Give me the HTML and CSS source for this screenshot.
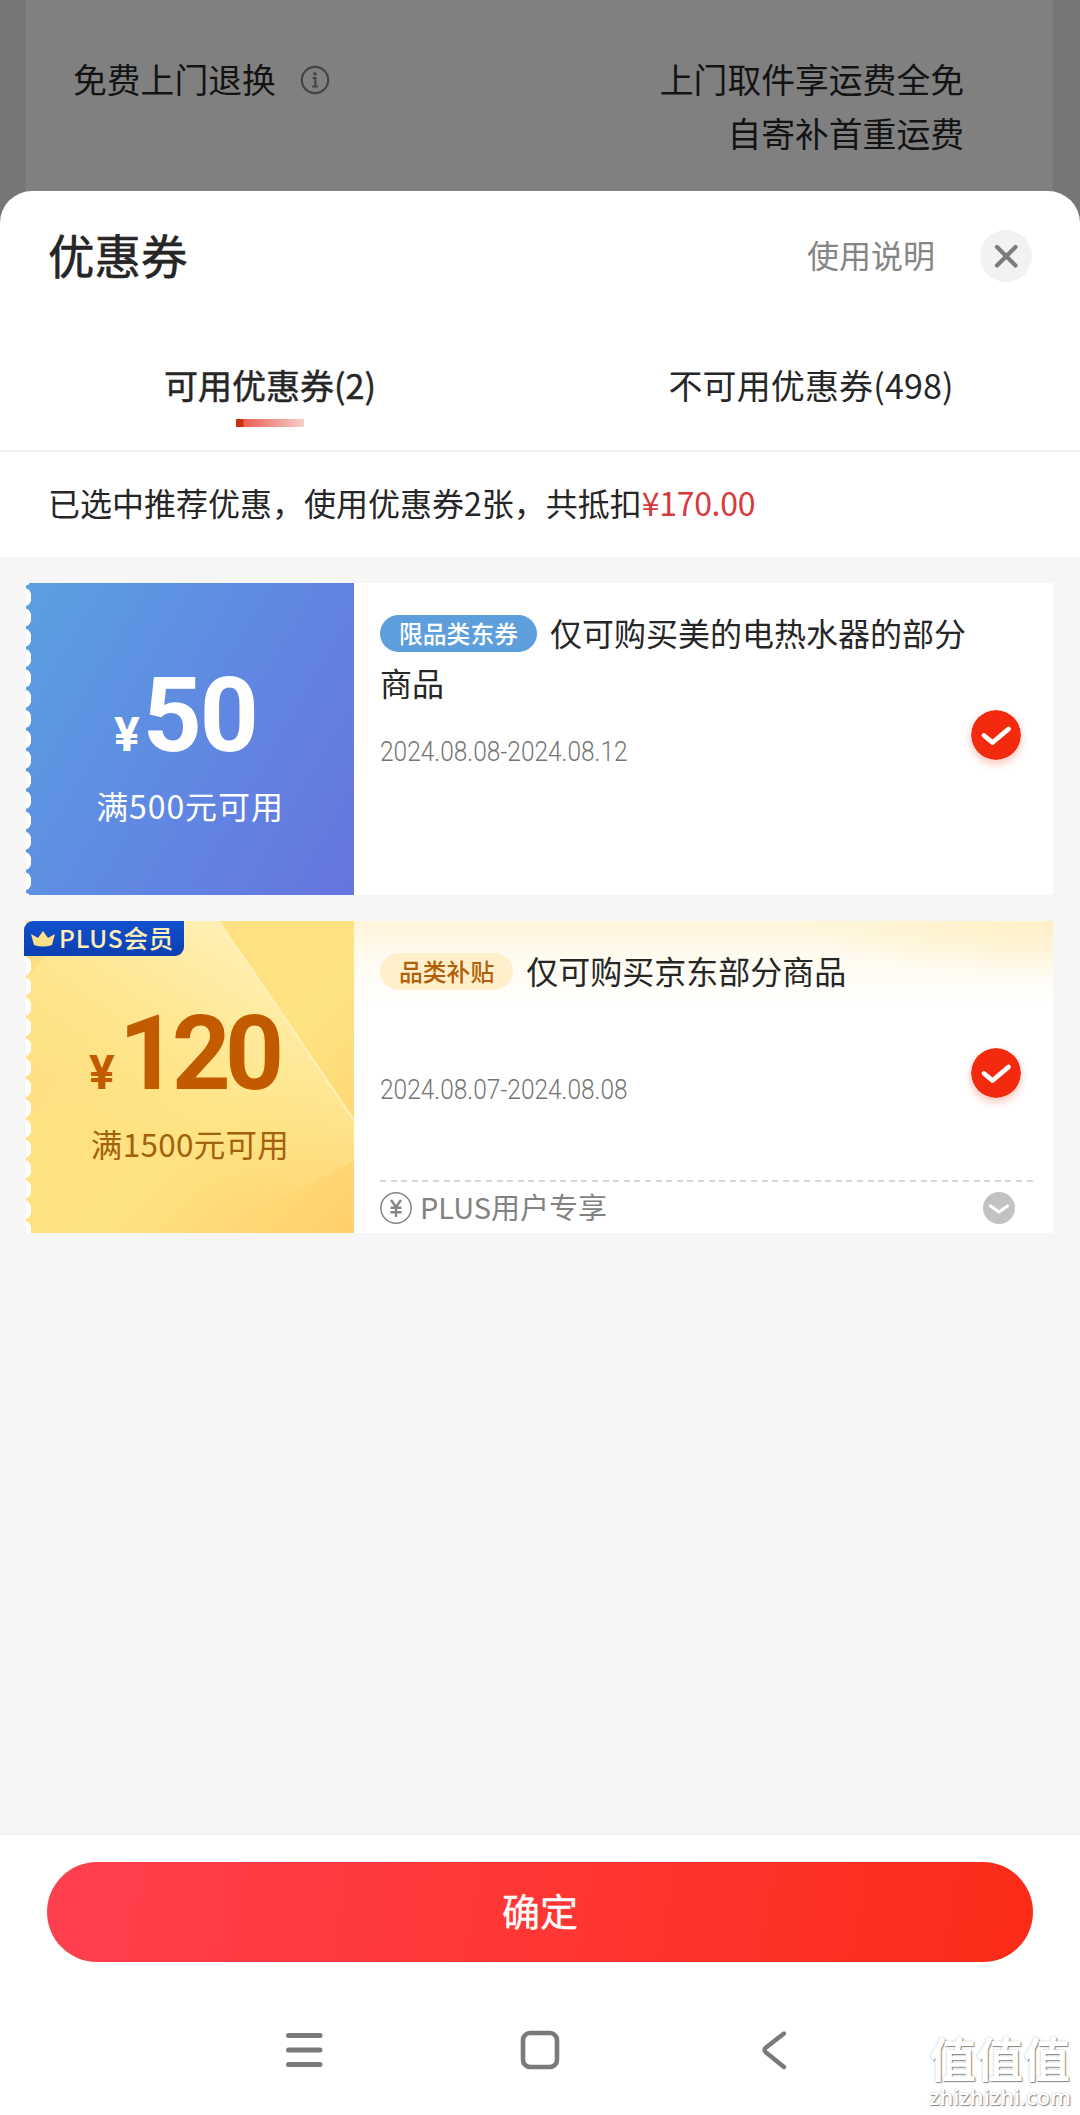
FILE: index.html
```html
<!DOCTYPE html>
<html lang="zh-CN">
<head>
<meta charset="utf-8">
<title>优惠券</title>
<link rel="stylesheet" href="styles.css">
</head>
<body>
<div class="screen">
  <section class="behind">
    <div class="behind-card">
      <div class="service"><span>免费上门退换</span>
        <svg class="info" viewBox="0 0 30 30"><circle cx="15" cy="15" r="13.2" fill="none" stroke="#444" stroke-width="2.2"/><circle cx="15" cy="9" r="1.8" fill="#444"/><path d="M12.500 13h2.900v8M12 21.500h6" fill="none" stroke="#444" stroke-width="2.200"/></svg>
      </div>
      <div class="service-desc">上门取件享运费全免<br>自寄补首重运费</div>
    </div>
  </section>
  <main class="sheet">
    <header class="head">
      <h1>优惠券</h1>
      <span class="help">使用说明</span>
      <span class="close"><svg viewBox="0 0 52 52"><path d="M17 17L35.500 35.500M35.500 17L17 35.500" stroke="#7c7c7c" stroke-width="4.200" stroke-linecap="round"/></svg></span>
    </header>
    <nav class="tabs">
      <div class="tab active">可用优惠券(2)</div>
      <div class="tab">不可用优惠券(498)</div>
    </nav>
    <p class="summary">已选中推荐优惠，使用优惠券2张，共抵扣<span class="price">¥170.00</span></p>
    <section class="list">
      <article class="coupon blue">
        <div class="stub">
          <div class="amount"><span class="yen">¥</span><span class="num">50</span></div>
          <div class="cond">满500元可用</div>
        </div>
        <div class="body">
          <div class="desc"><span class="tag">限品类东券</span>仅可购买美的电热水器的部分商品</div>
          <div class="date">2024.08.08-2024.08.12</div>
          <svg class="check" viewBox="0 0 50 50"><circle cx="25" cy="25" r="25" fill="#f42a0e"/><path d="M13 25.500L21.500 32.500L37.500 19" fill="none" stroke="#fff" stroke-width="4.800" stroke-linecap="round" stroke-linejoin="round"/></svg>
        </div>
      </article>
      <article class="coupon gold">
        <div class="stub">
          <svg class="rays" viewBox="0 0 328 312" preserveAspectRatio="none">
            <defs>
              <linearGradient id="ray" x1=".75" y1=".1" x2=".35" y2=".75"><stop offset="0" stop-color="#fff3c0" stop-opacity=".85"/><stop offset="1" stop-color="#ffe98a" stop-opacity="0"/></linearGradient>
            </defs>
            <path d="M0 60L45 0H194L328 199V240L190 312H0z" fill="url(#ray)"/>
            <path d="M210 25L328 199" stroke="#fff0b8" stroke-width="2"/>
          </svg>
          <div class="plus"><svg viewBox="0 0 24 18"><path d="M3 15L0 4L7 8L12 1L17 8L24 4L21 15Q12 18 3 15z" fill="#ffe08a"/></svg><span>PLUS会员</span></div>
          <div class="amount"><span class="yen">¥</span><span class="num">120</span></div>
          <div class="cond">满1500元可用</div>
        </div>
        <div class="body">
          <div class="desc"><span class="tag">品类补贴</span>仅可购买京东部分商品</div>
          <div class="date">2024.08.07-2024.08.08</div>
          <svg class="check" viewBox="0 0 50 50"><circle cx="25" cy="25" r="25" fill="#f42a0e"/><path d="M13 25.500L21.500 32.500L37.500 19" fill="none" stroke="#fff" stroke-width="4.800" stroke-linecap="round" stroke-linejoin="round"/></svg>
          <div class="perk">
            <svg viewBox="0 0 32 32"><g fill="none" stroke="#858585"><circle cx="16" cy="16" r="15.200" stroke-width="1.500"/><path d="M11 8L16 15L21 8M16 15V25M10.500 15.800H21.500M10.500 20.300H21.500" stroke-width="2.400"/></g></svg>
            <span class="perk-text">PLUS用户专享</span>
            <svg class="more" viewBox="0 0 32 32"><circle cx="16" cy="16" r="16" fill="#c2c2c2"/><path d="M7.500 14L16 20L24.500 14" fill="none" stroke="#fff" stroke-width="3.200" stroke-linecap="round" stroke-linejoin="round"/></svg>
          </div>
        </div>
      </article>
    </section>
    <footer class="foot"><button class="ok">确定</button></footer>
    <div class="sysnav">
      <svg viewBox="0 0 40 40"><path d="M4.500 5.500H36M4.500 20H36M4.500 34.500H36" stroke="#7a7a7a" stroke-width="5" stroke-linecap="round"/></svg>
      <svg viewBox="0 0 40 40"><rect x="3" y="3" width="34" height="34" rx="7" fill="none" stroke="#7a7a7a" stroke-width="4.600"/></svg>
      <svg viewBox="0 0 40 40"><path d="M28 3.500L10 17.500Q7 20 10 22.500L28 37" fill="none" stroke="#7a7a7a" stroke-width="4.400" stroke-linecap="round"/></svg>
    </div>
  </main>
  <div class="mark"><div class="mark-cn">值值值</div><div class="mark-url">zhizhizhi.com</div></div>
</div>
</body>
</html>
```
FILE: styles.css
```css
* { box-sizing: border-box; }
body {
  margin: 0;
  font-family: "Noto Sans CJK SC", sans-serif;
  font-weight: 400;
  color: #262626;
}
.screen {
  position: relative;
  width: 1080px;
  height: 2115px;
  overflow: hidden;
  background: #767676;
  display: flex;
  flex-direction: column;
}
svg { display: block; flex: none; }

.behind { height: 191px; padding: 0 27px 0 26px; flex: none; }
.behind-card {
  height: 191px;
  padding: 52px 89px 0 47px;
  background: #808080;
  color: #131313;
  font-size: 33.8px;
  line-height: 54px;
  display: flex;
  justify-content: space-between;
}
.service { display: flex; height: 54px; align-items: center; gap: 24px; }
.info { width: 30px; height: 30px; margin-top: 2px; }
.service-desc { text-align: right; }

.sheet {
  flex: 1;
  display: flex;
  flex-direction: column;
  border-radius: 32px 32px 0 0;
  background: #fff;
  overflow: hidden;
}
.head {
  height: 130px;
  padding: 0 48px;
  display: flex;
  align-items: center;
  flex: none;
}
h1 {
  margin: 0;
  padding-bottom: 5px;
  font-size: 46.5px;
  font-weight: 400;
  line-height: 60px;
  -webkit-text-stroke: .6px;
}
.help { margin-left: auto; padding-bottom: 4px; font-size: 32px; color: #858585; }
.close { width: 52px; height: 52px; margin-left: 45px; border-radius: 50%; background: #f2f2f2; }
.tabs {
  flex: none;
  height: 131px;
  border-bottom: 2px solid #f3f3f3;
  display: grid;
  grid-template-columns: 1fr 1fr;
}
.tab {
  padding-top: 40px;
  display: flex;
  flex-direction: column;
  align-items: center;
  font-size: 34px;
  line-height: 48px;
}
.tab + .tab { padding-left: 2px; letter-spacing: .15px; }
.tab.active { -webkit-text-stroke: .5px; }
.tab.active::after {
  content: "";
  width: 68px;
  height: 8px;
  margin-top: 10px;
  background: linear-gradient(90deg, #d03010 0 7px, #ea6052 8px, #f6cfca);
}
.summary {
  flex: none;
  height: 105px;
  margin: 0;
  padding: 0 48px;
  font-size: 32px;
  line-height: 100px;
  white-space: nowrap;
}
.price { color: #d7393c; letter-spacing: -.3px; }

.list {
  flex: none;
  height: 1276px;
  padding: 26px 27px 26px 26px;
  background: #f6f6f6;
  display: flex;
  flex-direction: column;
  gap: 26px;
}
.coupon { height: 312px; flex: none; display: flex; background: #fff; }
.stub {
  width: 328px;
  flex: none;
  position: relative;
  display: flex;
  flex-direction: column;
  align-items: center;
  padding-top: 78px;
}
.blue .stub {
  color: #fff;
  background:
    radial-gradient(ellipse 5.500px 9px at 0 50%, #fff 92%, transparent) 0 4px / 6px 20.300px repeat-y,
    linear-gradient(120deg, #5aa0e0 0%, #6087e2 55%, #6675de 100%);
}
.gold .stub {
  color: #c25a00;
  background: linear-gradient(135deg, #ffde82 0%, #ffe282 60%, #ffd06a 100%);
}
.gold .stub::before {
  content: "";
  position: absolute;
  left: 0;
  top: 35px;
  width: 6px;
  bottom: 0;
  background: radial-gradient(ellipse 5.500px 9px at 0 50%, #fff 92%, transparent) 0 0 / 6px 20.300px repeat-y;
  z-index: 1;
}
.rays { position: absolute; inset: 0; width: 328px; height: 312px; }
.amount {
  position: relative;
  height: 110px;
  display: flex;
  align-items: baseline;
  font-family: Roboto, sans-serif;
  font-weight: 700;
  line-height: 110px;
  gap: 3px;
  margin-left: -9px;
}
.yen { font-size: 48px; }
.num { font-size: 103px; letter-spacing: -2px; }
.gold .amount { gap: 4px; margin-left: -13px; }
.gold .num { letter-spacing: -6px; }
.cond { position: relative; margin-top: 10px; font-size: 32px; line-height: 48px; letter-spacing: .9px; }
.gold .cond { color: #a2620c; font-size: 31.500px; letter-spacing: .3px; }
.plus {
  position: absolute;
  left: -2px;
  top: 0;
  z-index: 2;
  width: 160px;
  height: 35px;
  padding-left: 7px;
  display: flex;
  align-items: center;
  gap: 4px;
  border-radius: 9px 0 9px 0;
  background: linear-gradient(#1150cf, #0c3fb0);
  color: #ffeeb5;
  font-size: 24.500px;
  font-weight: 500;
  line-height: 33px;
  letter-spacing: .8px;
  white-space: nowrap;
}
.plus span { padding-bottom: 2px; }
.plus svg { width: 24px; height: 18px; }

.body {
  flex: 1;
  position: relative;
  padding: 24px 16px 0 26px;
  display: flex;
  flex-direction: column;
}
.gold .body {
  background:
    radial-gradient(ellipse 260px 60px at 100% 0, #fff0c6, transparent),
    linear-gradient(#fff5d8, #fffbf0 35px, #fff 85px);
}
.desc { width: 600px; height: 100px; font-size: 32px; line-height: 50px; }
.tag {
  display: inline-block;
  vertical-align: 3px;
  height: 37px;
  padding: 0 19px;
  margin-right: 13px;
  border-radius: 19px;
  background: #5d9fdd;
  color: #fff;
  font-size: 23.800px;
  font-weight: 500;
  line-height: 35px;
}
.gold .tag { background: #ffefcb; color: #b35f08; }
.date {
  margin-top: 25px;
  width: max-content;
  font-family: Roboto, sans-serif;
  font-weight: 300;
  font-size: 28px;
  line-height: 40px;
  color: #757575;
  transform: scaleX(.874);
  transform-origin: left;
}
.check {
  position: absolute;
  right: 32px;
  top: 127px;
  width: 50px;
  height: 50px;
  border-radius: 50%;
  box-shadow: 0 4px 8px rgba(244, 42, 14, .28);
}
.perk {
  margin-top: auto;
  height: 53px;
  padding: 2px 22px 0 0;
  background: repeating-linear-gradient(90deg, #d6d6d6 0 6px, transparent 6px 10.600px) top / 100% 2px no-repeat;
  display: flex;
  align-items: center;
  gap: 8px;
  font-size: 29px;
  line-height: 40px;
  color: #828282;
}
.perk svg { width: 32px; height: 32px; }
.perk-text { padding-bottom: 4px; }
.perk .more { margin-left: auto; }

.foot {
  flex: none;
  height: 150px;
  padding: 27px 47px 0;
  border-top: 2px solid #f0f0f0;
}
.ok {
  display: block;
  width: 986px;
  height: 100px;
  padding: 0 0 4px;
  border: 0;
  border-radius: 50px;
  background: linear-gradient(100deg, #ff4050, #ff3633 50%, #fb2b17);
  color: #fff;
  font: 400 38px/96px "Noto Sans CJK SC", sans-serif;
  -webkit-text-stroke: .3px;
}
.sysnav { flex: 1; padding: 47px 284px 0; display: flex; justify-content: space-between; }
.sysnav svg { width: 40px; height: 40px; }

.mark {
  position: absolute;
  left: 929px;
  top: 2022px;
  color: #fff;
  text-shadow: 1px 1px 1px #888, 0 0 2px #bbb;
  font-weight: 700;
}
.mark-cn { font-size: 47px; line-height: 69px; }
.mark-url {
  margin-top: -9px;
  font-family: "Open Sans", sans-serif;
  font-size: 21.800px;
  font-weight: 600;
  line-height: 30px;
}
```
